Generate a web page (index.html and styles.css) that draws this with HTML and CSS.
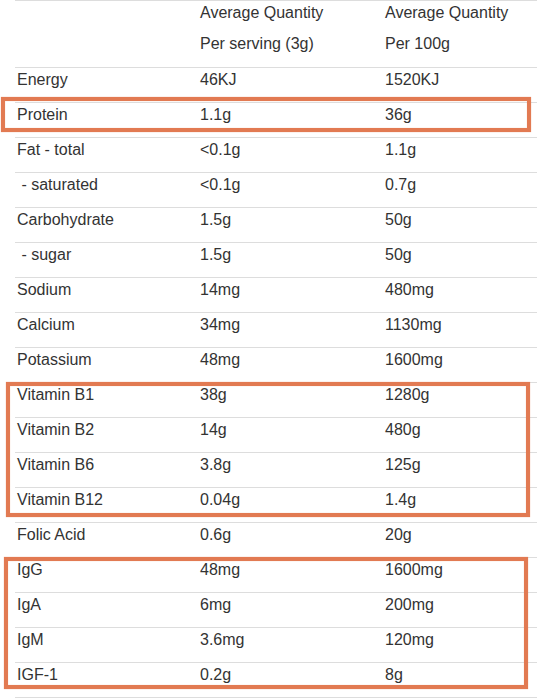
FILE: index.html
```html
<!DOCTYPE html>
<html>
<head>
<meta charset="utf-8">
<link rel="stylesheet" href="styles.css">
</head>
<body>
<div class="page">
  <div class="table">
    <div class="row head">
      <div class="cell"></div>
      <div class="cell"><div class="hl">Average Quantity</div><div class="hl second">Per serving (3g)</div></div>
      <div class="cell"><div class="hl">Average Quantity</div><div class="hl second">Per 100g</div></div>
    </div>
    <div class="row"><div class="cell">Energy</div><div class="cell">46KJ</div><div class="cell">1520KJ</div></div>
    <div class="row"><div class="cell">Protein</div><div class="cell">1.1g</div><div class="cell">36g</div></div>
    <div class="row"><div class="cell">Fat - total</div><div class="cell">&lt;0.1g</div><div class="cell">1.1g</div></div>
    <div class="row"><div class="cell">&nbsp;- saturated</div><div class="cell">&lt;0.1g</div><div class="cell">0.7g</div></div>
    <div class="row"><div class="cell">Carbohydrate</div><div class="cell">1.5g</div><div class="cell">50g</div></div>
    <div class="row"><div class="cell">&nbsp;- sugar</div><div class="cell">1.5g</div><div class="cell">50g</div></div>
    <div class="row"><div class="cell">Sodium</div><div class="cell">14mg</div><div class="cell">480mg</div></div>
    <div class="row"><div class="cell">Calcium</div><div class="cell">34mg</div><div class="cell">1130mg</div></div>
    <div class="row"><div class="cell">Potassium</div><div class="cell">48mg</div><div class="cell">1600mg</div></div>
    <div class="row"><div class="cell">Vitamin B1</div><div class="cell">38g</div><div class="cell">1280g</div></div>
    <div class="row"><div class="cell">Vitamin B2</div><div class="cell">14g</div><div class="cell">480g</div></div>
    <div class="row"><div class="cell">Vitamin B6</div><div class="cell">3.8g</div><div class="cell">125g</div></div>
    <div class="row"><div class="cell">Vitamin B12</div><div class="cell">0.04g</div><div class="cell">1.4g</div></div>
    <div class="row"><div class="cell">Folic Acid</div><div class="cell">0.6g</div><div class="cell">20g</div></div>
    <div class="row"><div class="cell">IgG</div><div class="cell">48mg</div><div class="cell">1600mg</div></div>
    <div class="row"><div class="cell">IgA</div><div class="cell">6mg</div><div class="cell">200mg</div></div>
    <div class="row"><div class="cell">IgM</div><div class="cell">3.6mg</div><div class="cell">120mg</div></div>
    <div class="row last"><div class="cell">IGF-1</div><div class="cell">0.2g</div><div class="cell">8g</div></div>
  </div>
  <div class="mark mark-protein"></div>
  <div class="mark mark-vitamins"></div>
  <div class="mark mark-ig"></div>
</div>
</body>
</html>
```

FILE: styles.css
```css
html, body {
  margin: 0;
  padding: 0;
  background: #ffffff;
}
body {
  font-family: "Liberation Sans", Arial, sans-serif;
  font-size: 16px;
  color: #333333;
  overflow: hidden;
}
.page {
  position: relative;
  width: 537px;
  height: 698px;
  overflow: hidden;
}
.table {
  margin-left: 15px;
  width: 530px;
}
.row {
  display: grid;
  grid-template-columns: 183px 185px 1fr;
  border-top: 1px solid #dddddd;
}
.row.last {
  border-bottom: 1px solid #dddddd;
}
.cell {
  padding: 1px 0 11px 2px;
  line-height: 22px;
  white-space: nowrap;
}
.row.head .cell {
  padding: 0 0 11px 2px;
}
.hl {
  line-height: 24px;
}
.hl.second {
  margin-top: 7px;
}
.mark {
  position: absolute;
  box-sizing: border-box;
  border: 4px solid #e27a52;
  box-shadow: 0 0 1px rgba(226, 122, 82, 0.6), inset 0 0 1px rgba(226, 122, 82, 0.6);
}
.mark-protein {
  left: 1px;
  top: 97px;
  width: 530px;
  height: 35px;
}
.mark-vitamins {
  left: 6px;
  top: 382px;
  width: 524px;
  height: 135px;
}
.mark-ig {
  left: 4px;
  top: 557px;
  width: 524px;
  height: 132px;
}
```
